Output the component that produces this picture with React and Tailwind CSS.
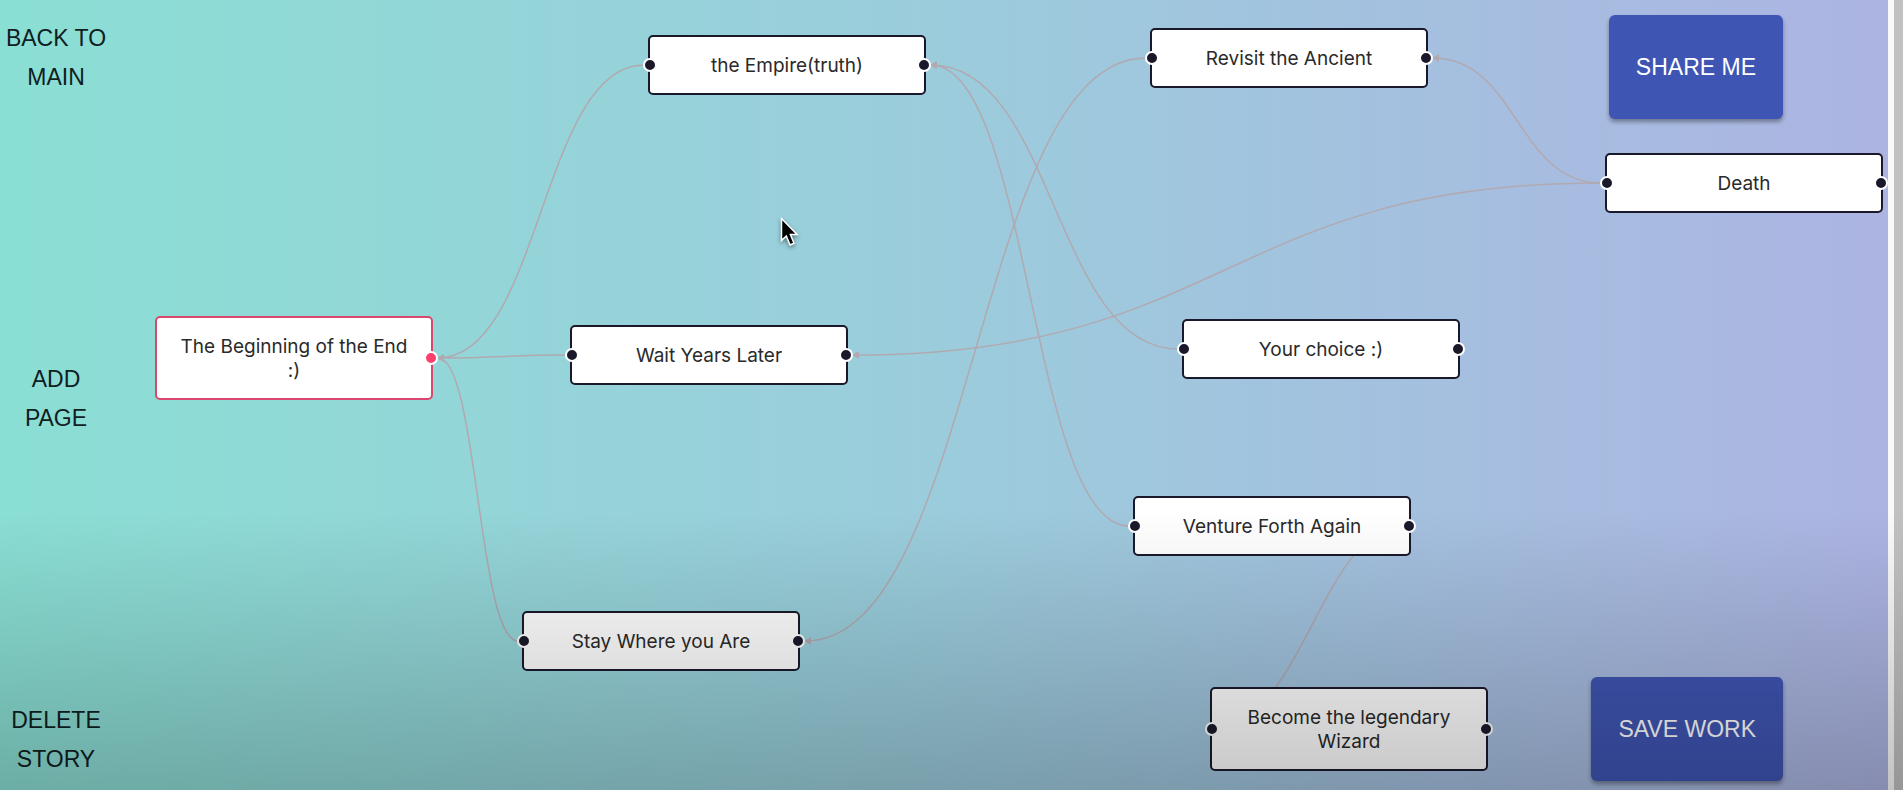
const NODE_WIDTH = 278;

const nodes = [
  { id: "beginning", label: "The Beginning of the End :)", x: 155, y: 316, h: 84, root: true },
  { id: "empire", label: "the Empire(truth)", x: 648, y: 35, h: 60 },
  { id: "wait", label: "Wait Years Later", x: 570, y: 325, h: 60 },
  { id: "stay", label: "Stay Where you Are", x: 522, y: 611, h: 60 },
  { id: "revisit", label: "Revisit the Ancient", x: 1150, y: 28, h: 60 },
  { id: "choice", label: "Your choice :)", x: 1182, y: 319, h: 60 },
  { id: "venture", label: "Venture Forth Again", x: 1133, y: 496, h: 60 },
  { id: "wizard", label: "Become the legendary Wizard", x: 1210, y: 687, h: 84 },
  { id: "death", label: "Death", x: 1605, y: 153, h: 60 },
];

const edges = [
  { from: "empire", to: "beginning" },
  { from: "wait", to: "beginning" },
  { from: "stay", to: "beginning" },
  { from: "choice", to: "empire" },
  { from: "venture", to: "empire" },
  { from: "revisit", to: "stay" },
  { from: "death", to: "revisit" },
  { from: "death", to: "wait" },
];

const byId = Object.fromEntries(nodes.map((n) => [n.id, n]));

function edgePath(from, to) {
  const a = byId[from];
  const b = byId[to];
  const x1 = a.x - 4;
  const y1 = a.y + a.h / 2;
  const x2 = b.x + NODE_WIDTH + 5;
  const y2 = b.y + b.h / 2;
  const mid = (x1 + x2) / 2;
  return `M${x1},${y1} C${mid},${y1} ${mid},${y2} ${x2},${y2}`;
}

function Edges() {
  return (
    <svg className="absolute inset-0 size-full" fill="none" aria-hidden="true">
      <defs>
        <marker id="arrow" markerUnits="userSpaceOnUse" markerWidth="9" markerHeight="10" refX="1" refY="5" orient="0">
          <path d="M1 5 L6.5 1.8 V8.2 Z" fill="#b1a9b0" stroke="#b1a9b0" strokeLinejoin="round" />
        </marker>
      </defs>
      {edges.map(({ from, to }) => (
        <path
          key={from + to}
          d={edgePath(from, to)}
          stroke="#b1a9b0"
          strokeWidth="1.5"
          markerEnd="url(#arrow)"
        />
      ))}
      {/* The wizard link runs behind both of its cards, so its ends stay hidden. */}
      <path d="M1210,729 C1303,729 1321,526 1404,526" stroke="#b1a9b0" strokeWidth="1.5" />
    </svg>
  );
}

function Handle({ side, root }) {
  return (
    <span
      className={`absolute top-1/2 size-3.5 -translate-y-1/2 rounded-full border-2 border-white ${
        side === "left" ? "-left-[7px]" : "-right-[7px]"
      } ${root ? "bg-[#ff3f6e]" : "bg-[#1a192b]"}`}
    />
  );
}

function StoryNode({ node }) {
  return (
    <div
      className={`absolute w-[278px] rounded-[5px] border-2 bg-white px-4 pt-[17px] pb-[15px] text-center text-[19px] leading-6 text-[#2a2a2a] ${
        node.root ? "border-[#d9476f]" : "border-[#1a192b]"
      }`}
      style={{ left: node.x, top: node.y }}
    >
      {!node.root && <Handle side="left" />}
      {node.label}
      <Handle side="right" root={node.root} />
    </div>
  );
}

function SideButton({ children }) {
  return (
    <button
      type="button"
      className="w-full px-1 text-center font-['Liberation_Sans',Arial,sans-serif] text-[23px] leading-[39px] text-[#10201f] uppercase"
    >
      {children}
    </button>
  );
}

function ActionButton({ children }) {
  return (
    <button
      type="button"
      className="rounded-md bg-[#3f55b3] px-[27px] py-8 font-['Liberation_Sans',Arial,sans-serif] text-[23px] leading-10 text-white uppercase shadow-[0_3px_4px_rgba(0,0,0,0.35)]"
    >
      {children}
    </button>
  );
}

export default function App() {
  return (
    <div className="relative flex h-screen overflow-hidden font-[Inter,sans-serif]">
      <main className="relative flex flex-1 justify-between overflow-hidden bg-linear-to-r from-[#8adfd4] via-[#9bccdc] to-[#acb4e2]">
        <section aria-label="Story map" className="absolute inset-0">
          <Edges />
          {nodes.map((node) => (
            <StoryNode key={node.id} node={node} />
          ))}
        </section>
        <nav className="relative flex w-28 flex-col justify-between pt-[19px] pb-[11px]">
          <SideButton>Back to main</SideButton>
          <SideButton>Add page</SideButton>
          <SideButton>Delete story</SideButton>
        </nav>
        <div className="relative mr-[105px] flex flex-col items-end justify-between pt-[15px] pb-[9px]">
          <ActionButton>Share me</ActionButton>
          <ActionButton>Save work</ActionButton>
        </div>
      </main>
      <div className="w-[15px] border-l-[6px] border-[#fafafa] bg-[#c1c1c1]" />
      <div className="pointer-events-none absolute inset-x-0 bottom-0 h-[280px] bg-linear-to-b from-black/0 to-black/22" />
      <svg
        className="pointer-events-none absolute top-[215px] left-[779px] h-[34px] w-[24px] drop-shadow-[0_2px_2px_rgba(0,0,0,0.4)]"
        viewBox="0 0 24 34"
        aria-hidden="true"
      >
        <path
          d="M2.5 3.5 V25.5 L7.3 21 L11 30 L15 28.3 L11.4 19.6 H18.3 Z"
          fill="#000"
          stroke="#fff"
          strokeWidth="1.5"
          strokeLinejoin="miter"
        />
      </svg>
    </div>
  );
}
